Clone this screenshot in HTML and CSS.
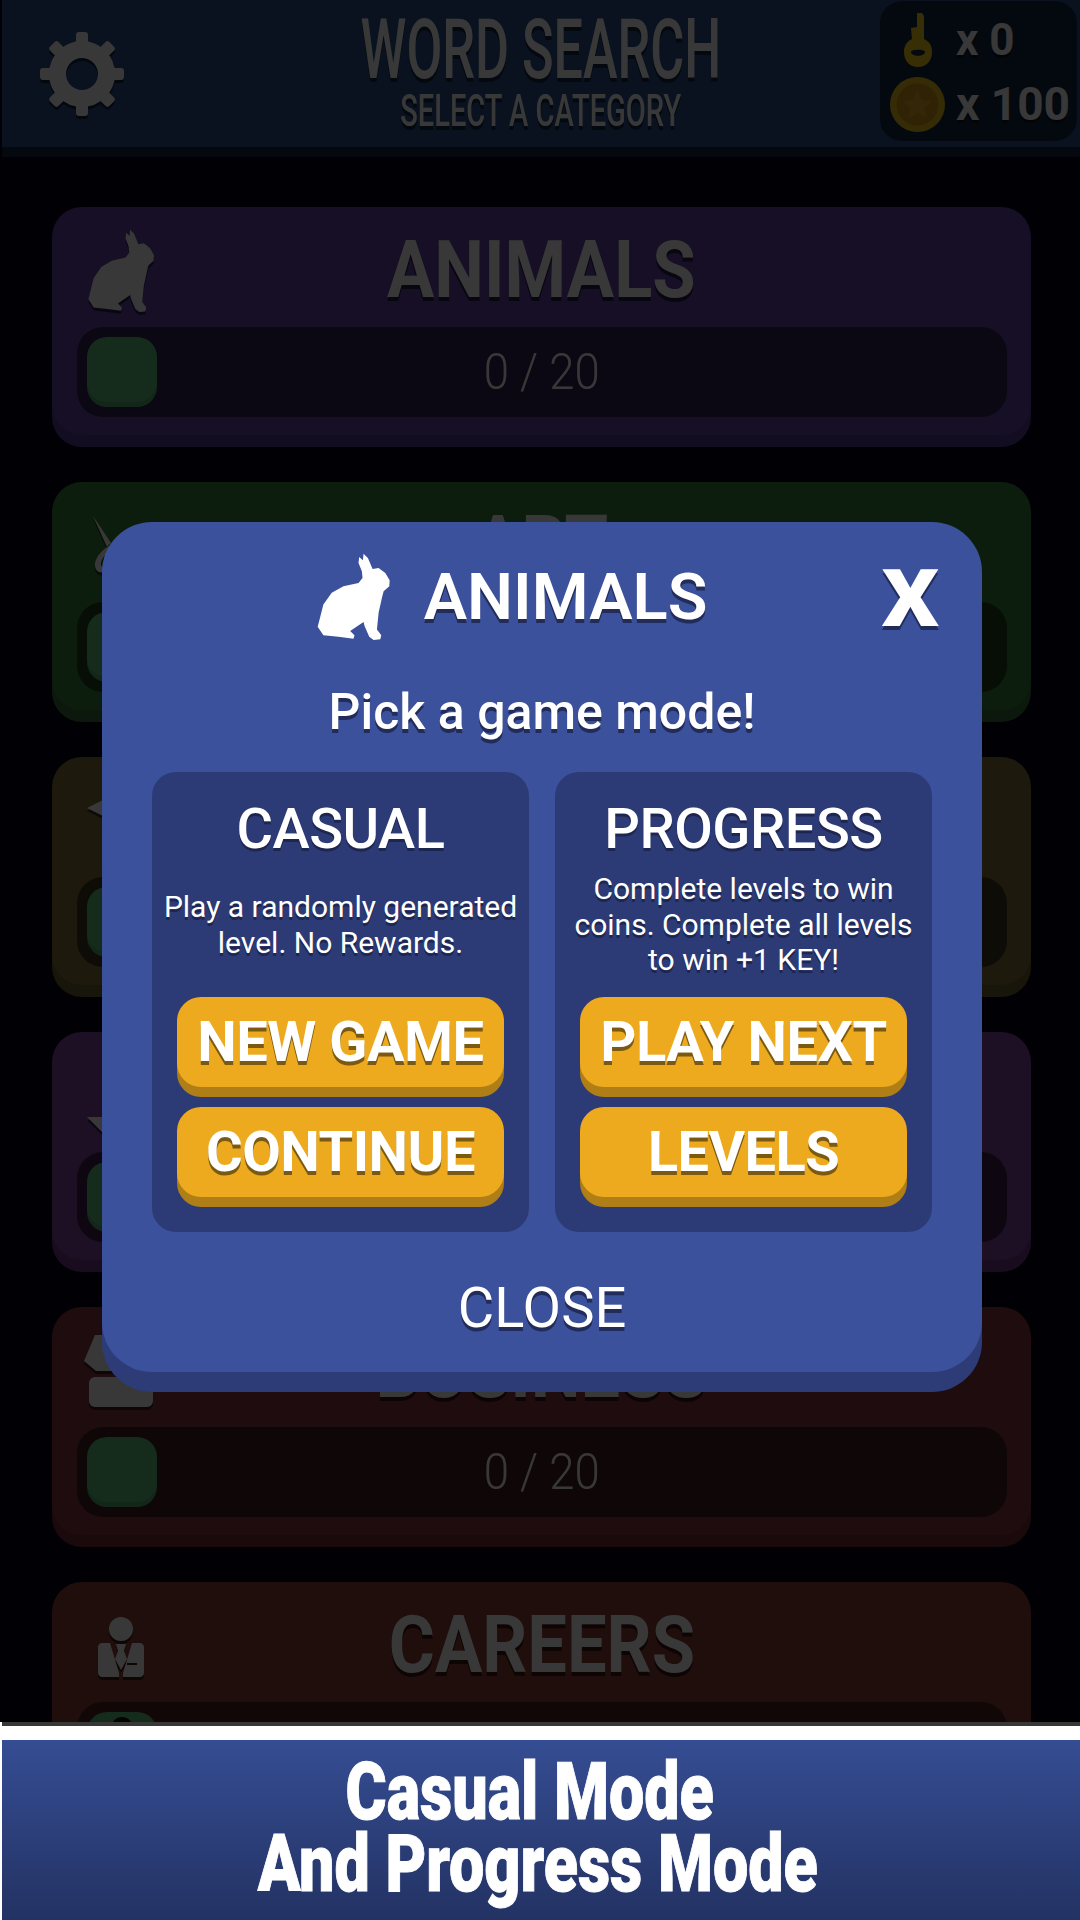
FILE: index.html
```html
<!DOCTYPE html>
<html lang="en">
<head>
  <meta charset="UTF-8">
  <title>Word Search</title>
  <link rel="stylesheet" href="styles.css">
</head>
<body>

<svg class="defs" width="0" height="0">
  <symbol id="rabbit" viewBox="100 70 230 265" preserveAspectRatio="none">
    <path d="M232 82 L243 92 L245 72 L258 85 L272 118 L290 115 L310 130 L323 152 L322 170 L305 185 L300 205 L290 250 L285 300 L298 318 L295 330 L275 332 L262 322 L248 290 L245 278 L205 305 L218 318 L215 328 L170 322 L125 318 L108 292 L115 265 L125 225 L150 190 L185 170 L230 160 L242 145 L240 125 L230 100 Z"/>
  </symbol>
</svg>

<div class="game">
  <header class="topbar">
    <svg class="gear" viewBox="0 0 84 84">
      <circle cx="42" cy="42" r="24.5" fill="none" stroke="#fff" stroke-width="17"/>
      <g fill="#fff">
        <rect x="36" y="0" width="12" height="20" rx="3"/>
        <rect x="36" y="0" width="12" height="20" rx="3" transform="rotate(45 42 42)"/>
        <rect x="36" y="0" width="12" height="20" rx="3" transform="rotate(90 42 42)"/>
        <rect x="36" y="0" width="12" height="20" rx="3" transform="rotate(135 42 42)"/>
        <rect x="36" y="0" width="12" height="20" rx="3" transform="rotate(180 42 42)"/>
        <rect x="36" y="0" width="12" height="20" rx="3" transform="rotate(225 42 42)"/>
        <rect x="36" y="0" width="12" height="20" rx="3" transform="rotate(270 42 42)"/>
        <rect x="36" y="0" width="12" height="20" rx="3" transform="rotate(315 42 42)"/>
      </g>
    </svg>
    <div class="brand">
      <h1 class="brand-name"><span>WORD SEARCH</span></h1>
      <p class="brand-sub"><span>SELECT A CATEGORY</span></p>
    </div>
    <div class="wallet">
      <svg class="key" viewBox="0 0 30 54">
        <path fill="#ffd21a" fill-rule="evenodd" d="M14 0 L19 0 L21 3 L21 26 C27 29 29 33 29 39 C29 48 23 54 15 54 C7 54 1 48 1 39 C1 33 4 28 9 26 L8 15 L14 14 Z M8 39 C8 44 22 44 22 39 C22 36 8 36 8 39 Z"/>
      </svg>
      <span class="wallet-count small">x 0</span>
      <svg class="coin" viewBox="0 0 55 55">
        <circle cx="27.5" cy="27.5" r="27.5" fill="#f2c81a"/>
        <circle cx="27.5" cy="27.5" r="21" fill="#d89a18"/>
        <path fill="#e8b020" d="M27.5 13 L31.8 23 L42.5 24 L34.5 31 L37 41.5 L27.5 36 L18 41.5 L20.5 31 L12.5 24 L23.2 23 Z"/>
      </svg>
      <span class="wallet-count">x 100</span>
    </div>
  </header>

  <main class="categories">
    <section class="category purple">
      <div class="category-head">
        <svg class="category-icon rabbit"><use href="#rabbit"/></svg>
        <h2><span>ANIMALS</span></h2>
      </div>
      <div class="track">
        <div class="thumb"></div>
        <span class="score"><span>0 / 20</span></span>
      </div>
    </section>

    <section class="category green">
      <div class="category-head">
        <svg class="category-icon" viewBox="0 0 60 70">
          <path d="M6 9 L24 36 L20 40 Z"/>
          <path d="M30 36 C18 38 8 50 8 58 C8 66 16 68 22 62 C28 56 34 46 36 40 L30 44 C26 52 20 60 16 60 C12 60 14 52 20 46 Z"/>
        </svg>
        <h2><span>ART</span></h2>
      </div>
      <div class="track">
        <div class="thumb"></div>
      </div>
    </section>

    <section class="category olive">
      <div class="category-head">
        <svg class="category-icon" viewBox="0 0 60 70">
          <path d="M0 26 L32 10 L64 26 L32 42 Z"/>
        </svg>
      </div>
      <div class="track">
        <div class="thumb"></div>
      </div>
    </section>

    <section class="category plum">
      <div class="category-head">
        <svg class="category-icon" viewBox="0 0 60 70">
          <path d="M16 56 L36 32 L36 56 Z"/>
          <path d="M0 60 L50 60 L32 80 L16 76 Z"/>
        </svg>
      </div>
      <div class="track">
        <div class="thumb"></div>
      </div>
    </section>

    <section class="category red">
      <div class="category-head">
        <svg class="category-icon briefcase" viewBox="0 0 72 72">
          <path d="M11 0 L61 0 L72 26 L60 36 L12 36 L0 26 Z"/>
          <rect x="5" y="42" width="64" height="30" rx="6"/>
        </svg>
        <h2><span>BUSINESS</span></h2>
      </div>
      <div class="track">
        <div class="thumb"></div>
        <span class="score"><span>0 / 20</span></span>
      </div>
    </section>

    <section class="category rust">
      <div class="category-head">
        <svg class="category-icon suit" viewBox="0 0 46 60">
          <circle cx="23" cy="12" r="12"/>
          <path d="M4 26 L12 26 L21 56 L21 60 L4 60 C2 60 0 58 0 56 L0 30 C0 28 2 26 4 26 Z"/>
          <path d="M34 26 L42 26 C44 26 46 28 46 30 L46 56 C46 58 44 60 42 60 L25 60 L25 56 Z M29 46 L29 48 L39 48 L39 46 Z" fill-rule="evenodd"/>
          <path d="M18 27 L28 27 L26 34 L29 42 L23 53 L17 42 L20 34 Z"/>
        </svg>
        <h2><span>CAREERS</span></h2>
      </div>
      <div class="track">
        <div class="thumb"><i class="thumb-lock"></i></div>
      </div>
    </section>
  </main>

  <div class="scrim"></div>

  <div class="modal">
    <div class="modal-head">
      <svg class="modal-rabbit"><use href="#rabbit"/></svg>
      <h2 class="modal-title">ANIMALS</h2>
    </div>
    <span class="modal-x">X</span>
    <p class="modal-lead">Pick a game mode!</p>
    <div class="modes">
      <div class="mode">
        <h3>CASUAL</h3>
        <p>Play a randomly generated<br>level. No Rewards.</p>
        <button class="btn">NEW GAME</button>
        <button class="btn">CONTINUE</button>
      </div>
      <div class="mode">
        <h3>PROGRESS</h3>
        <p>Complete levels to win<br>coins. Complete all levels<br>to win +1 KEY!</p>
        <button class="btn">PLAY NEXT</button>
        <button class="btn">LEVELS</button>
      </div>
    </div>
    <div class="modal-close">CLOSE</div>
  </div>
</div>

<footer class="banner">
  <div class="banner-line first"><span>Casual Mode</span></div>
  <div class="banner-line second"><span>And Progress Mode</span></div>
</footer>

</body>
</html>
```

FILE: styles.css
```css
* {
  box-sizing: border-box;
}
body {
  margin: 0;
  width: 1080px;
  height: 1920px;
  background: white;
  font-family: Roboto, sans-serif;
  overflow: hidden;
}
h1, h2, h3, p {
  margin: 0;
}
.defs {
  display: block;
  height: 0;
}

/* game area, everything under the popup gets dimmed by .scrim */
.game {
  position: relative;
  height: 1726px;
  padding-left: 2px;
  background: linear-gradient(#000018 1722px, white 1722px);
  overflow: hidden;
}
.game::after {
  content: "";
  position: absolute;
  left: 2px;
  right: 0;
  bottom: 0;
  height: 4px;
  background: #383838;
}
.topbar {
  display: grid;
  grid-template-columns: 1fr auto 1fr;
  align-items: center;
  height: 157px;
  border-bottom: 10px solid #172444;
  background: #2d5291;
  color: white;
}
.gear {
  width: 84px;
  height: 84px;
  margin-left: 38px;
  filter: drop-shadow(0 3px 0 rgba(0, 0, 0, 0.55));
}
.brand {
  display: flex;
  flex-direction: column;
  align-items: center;
  height: 147px;
}
.brand-name,
.brand-sub {
  display: flex;
  justify-content: center;
  width: 360px;
  font-weight: 500;
  white-space: nowrap;
  text-shadow: 0 4px 0 rgba(0, 0, 0, 0.5);
}
.brand-name {
  height: 84px;
  margin-top: 8px;
  font-size: 84px;
  line-height: 84px;
}
.brand-name span {
  display: inline-block;
  transform: scaleX(0.62);
}
.brand-sub {
  height: 38px;
  font-size: 45px;
  line-height: 38px;
}
.brand-sub span {
  display: inline-block;
  transform: scaleX(0.645);
}
.wallet {
  justify-self: end;
  display: grid;
  grid-template-columns: 55px auto;
  grid-template-rows: 64px 64px;
  column-gap: 11px;
  align-items: center;
  justify-items: center;
  width: 197px;
  height: 140px;
  margin: 0 3px 5px 0;
  padding: 7px 0 0 10px;
  border-radius: 22px;
  background: rgba(0, 0, 0, 0.5);
}
.key {
  width: 30px;
  height: 54px;
}
.coin {
  width: 55px;
  height: 55px;
}
.wallet-count {
  justify-self: start;
  font-size: 46px;
  font-weight: 700;
  text-shadow: 0 3px 0 rgba(0, 0, 0, 0.5);
}
.wallet-count.small {
  font-size: 44px;
}

.categories {
  display: flex;
  flex-direction: column;
  gap: 47px;
  width: 979px;
  margin-left: 50px;
  padding-top: 50px;
}
.category {
  height: 228px;
  flex: none;
  border-radius: 30px;
  color: white;
}
.purple { background: #6444ad; box-shadow: 0 12px 0 #583c96; }
.green { background: #3b843b; box-shadow: 0 12px 0 #336f33; }
.olive { background: #847239; box-shadow: 0 12px 0 #6f6030; }
.plum { background: #8444a4; box-shadow: 0 12px 0 #6f3a8a; }
.red { background: #8d3740; box-shadow: 0 12px 0 #772e36; }
.rust { background: #914037; box-shadow: 0 12px 0 #7a362e; }

.category-head {
  display: grid;
  grid-template-columns: 1fr auto 1fr;
  align-items: center;
  height: 120px;
  padding-left: 35px;
  padding-right: 35px;
}
.category-head h2 {
  margin-top: 5px;
  font-size: 80px;
  font-weight: 700;
  line-height: 94px;
  white-space: nowrap;
  text-align: center;
  text-shadow: 0 4px 0 rgba(0, 0, 0, 0.6);
}
.category-head h2 span {
  display: inline-block;
  transform: scaleX(0.88);
}
.category-icon {
  width: 60px;
  height: 70px;
  fill: white;
  overflow: visible;
  filter: drop-shadow(0 3px 0 rgba(0, 0, 0, 0.55));
}
.category-icon.rabbit {
  width: 70px;
  height: 84px;
  margin-top: 8px;
  margin-left: -1px;
}
.category-icon.briefcase {
  width: 72px;
  height: 72px;
  margin-top: 8px;
  margin-left: -3px;
}
.category-icon.suit {
  width: 46px;
  height: 60px;
  margin-left: 11px;
  margin-top: 10px;
}
.track {
  display: grid;
  grid-template-columns: 1fr auto 1fr;
  align-items: center;
  height: 90px;
  margin: 0 24px 0 25px;
  padding: 0 10px;
  border-radius: 26px;
  background: rgba(0, 0, 0, 0.5);
}
.thumb {
  width: 70px;
  height: 65px;
  margin-bottom: 5px;
  border-radius: 20px;
  background: #5fc87f;
  box-shadow: 0 5px 0 #52ad76;
  position: relative;
  overflow: hidden;
}
.thumb-lock {
  position: absolute;
  left: 24px;
  top: 5px;
  width: 22px;
  height: 22px;
  border-radius: 50%;
  background: #111;
}
.score {
  font-size: 50px;
  font-weight: 300;
  color: white;
}
.score span {
  display: inline-block;
  transform: scaleX(0.91);
}

.scrim {
  position: absolute;
  top: 0;
  right: 0;
  bottom: 4px;
  left: 0;
  background: rgba(0, 0, 0, 0.78);
}

/* popup */
.modal {
  position: absolute;
  left: 102px;
  top: 522px;
  width: 880px;
  height: 850px;
  border-radius: 50px;
  background: #3b519c;
  box-shadow: 0 20px 0 #2d3c77;
  color: white;
  text-align: center;
  text-shadow: 0 4px 0 #222c5a;
}
.modal-head {
  display: flex;
  justify-content: center;
  align-items: center;
  gap: 32px;
  height: 120px;
  padding-top: 30px;
  padding-right: 62px;
}
.modal-rabbit {
  width: 77px;
  height: 88px;
  fill: white;
}
.modal-title {
  font-size: 65px;
  font-weight: 600;
  line-height: 80px;
}
.modal-x {
  position: absolute;
  top: 30px;
  right: 43px;
  font-size: 80px;
  font-weight: 900;
  transform: scaleX(1.12);
  transform-origin: right center;
}
.modal-lead {
  margin-top: 40px;
  font-size: 50px;
  font-weight: 500;
  line-height: 60px;
}
.modes {
  display: grid;
  grid-template-columns: 377px 377px;
  gap: 26px;
  margin: 30px 50px 0;
}
.mode {
  display: flex;
  flex-direction: column;
  gap: 10px;
  height: 460px;
  padding: 25px 25px 35px;
  border-radius: 24px;
  background: #2c3b76;
  text-shadow: 0 3px 0 #1d264f;
}
.mode h3 {
  font-size: 56px;
  font-weight: 500;
  letter-spacing: -0.5px;
  line-height: 64px;
}
.mode p {
  flex: 1;
  display: flex;
  align-items: center;
  justify-content: center;
  margin: 0 -20px 9px;
  font-size: 30px;
  line-height: 35.5px;
}
.btn {
  flex: none;
  height: 90px;
  margin-bottom: 10px;
  padding: 0;
  border: none;
  border-radius: 24px;
  background: #edaa1f;
  box-shadow: 0 10px 0 #b07e17;
  color: white;
  font-family: Roboto, sans-serif;
  font-size: 56px;
  font-weight: 700;
  letter-spacing: -0.5px;
  white-space: nowrap;
  text-shadow: 0 4px 0 #7a5a12;
}
.mode .btn:last-child {
  margin-bottom: 0;
}
.modal-close {
  margin-top: 44px;
  font-size: 56px;
  line-height: 64px;
}

.banner {
  margin: 14px 0 0 2px;
  height: 180px;
  padding-top: 16px;
  background: linear-gradient(#354d93, #233263);
  color: white;
  font-size: 80px;
  font-weight: 900;
  text-align: center;
}
.banner-line {
  display: flex;
  justify-content: center;
  height: 72px;
  line-height: 72px;
  white-space: nowrap;
  -webkit-text-stroke: 1px white;
}
.banner-line span {
  display: inline-block;
  transform: scaleX(0.785);
}
.banner-line.first {
  padding-right: 23px;
}
.banner-line.second {
  padding-right: 7px;
}
```
